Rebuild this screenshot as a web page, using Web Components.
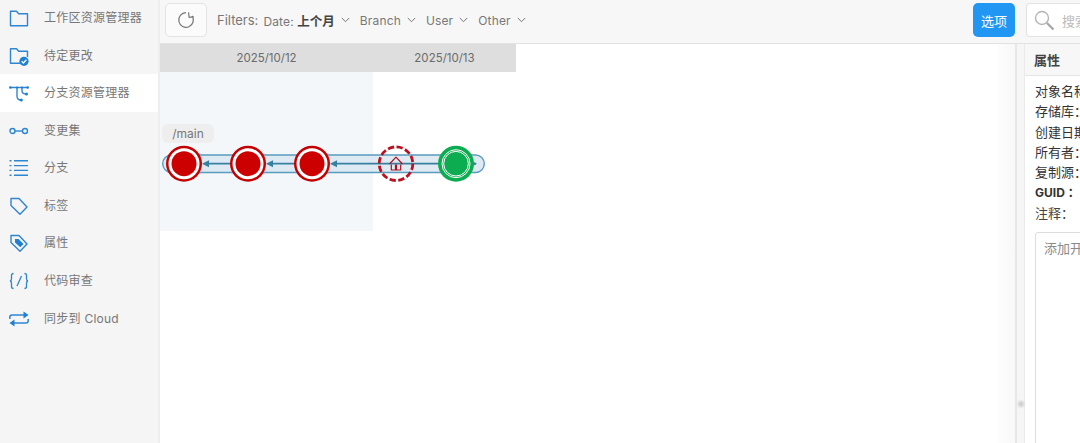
<!DOCTYPE html>
<html lang="zh"><head><meta charset="utf-8"><title>分支资源管理器</title>
<style>
html,body{margin:0;padding:0;height:100%;overflow:hidden;background:#fff}
body{font-family:Inter,"Noto Sans CJK SC",sans-serif}
</style></head><body>
<plastic-app></plastic-app>
<template id="t-app"><style>
:host{display:grid;grid-template-columns:160px 1fr;width:1080px;height:443px;overflow:hidden}
.main{display:grid;grid-template-rows:44px 1fr;min-width:0;height:443px}
.body{display:grid;grid-template-columns:837px 18px 9px 1fr;min-height:0}
.gutter{background:linear-gradient(90deg,#fdfdfd,#f8f8f8)}
</style>
<side-bar></side-bar>
<div class="main"><tool-bar></tool-bar>
<div class="body"><branch-canvas></branch-canvas><div class="gutter"></div><split-bar></split-bar><props-panel></props-panel></div></div>
</template>

<template id="t-side"><style>
:host{display:flex;flex-direction:column;background:#f5f5f5;border-right:2px solid #eeeeee;box-sizing:border-box;width:160px;height:443px;font:12px "Inter","Noto Sans CJK SC",sans-serif;color:#777}
nav-item:first-of-type{margin-top:-.9px}
</style>
<nav-item label="工作区资源管理器"><svg viewBox="0 0 20 20"><path d="M1.500 3.200h6l2.200 2.600h8.800v12H1.500z" fill="none" stroke="#2f86d0" stroke-width="1.400" stroke-linejoin="round"/></svg></nav-item>
<nav-item label="待定更改"><svg viewBox="0 0 20 20"><path d="M11 17.300H1.500V2.700h6l2.200 2.600h8.800V11" fill="none" stroke="#2f86d0" stroke-width="1.400" stroke-linejoin="round"/><circle cx="15" cy="15.300" r="4.600" fill="#1f7fd0"/><path d="M12.700 15.300l1.700 1.700 3-3.200" fill="none" stroke="#fff" stroke-width="1.300"/></svg></nav-item>
<nav-item label="分支资源管理器" active><svg viewBox="0 0 20 20"><g fill="none" stroke="#2f86d0" stroke-width="1.400"><path d="M1 4.500h18M8 4.500V13q0 4 4 4M13 4.500V8q0 3 4.500 3"/></g><g fill="#1f7fd0"><circle cx="1.300" cy="4.500" r="1.300"/><circle cx="8" cy="4.500" r="1.100"/><circle cx="13" cy="4.500" r="1.100"/><circle cx="18.700" cy="4.500" r="1.300"/><circle cx="12.300" cy="17" r="1.500"/><circle cx="17.500" cy="11" r="1.500"/></g></svg></nav-item>
<nav-item label="变更集"><svg viewBox="0 0 20 20"><g fill="none" stroke="#2f86d0" stroke-width="1.400"><circle cx="3.500" cy="10" r="2.500"/><circle cx="16" cy="10" r="2.500"/><path d="M6 10h7.500"/></g></svg></nav-item>
<nav-item label="分支"><svg viewBox="0 0 20 20"><g stroke="#2f86d0" stroke-width="1.400" fill="none"><path d="M5 2.800h14M5 7.600h14M5 12.400h14M5 17.200h14"/><path d="M.5 2.800h2M.5 7.600h2M.5 12.400h2M.5 17.200h2"/></g></svg></nav-item>
<nav-item label="标签"><svg viewBox="0 0 20 20"><path d="M2 2.500h8l8 8.500-7 7.200-9-8.700z" fill="none" stroke="#2f86d0" stroke-width="1.400" stroke-linejoin="round"/></svg></nav-item>
<nav-item label="属性"><svg viewBox="0 0 20 20"><path d="M2 2.500h8l8 8.500-7 7.200-9-8.700z" fill="none" stroke="#2f86d0" stroke-width="1.400" stroke-linejoin="round"/><path d="M6 6h3.500l5 5-3.300 3.300L6 9.500z" fill="#1f7fd0"/></svg></nav-item>
<nav-item label="代码审查"><svg viewBox="0 0 20 20"><g fill="none" stroke="#2f86d0" stroke-width="1.300"><path d="M4.500 2.500q-2 0-2 2v3.300q0 2-1.500 2.200 1.500.2 1.500 2.200v3.300q0 2 2 2M15.500 2.500q2 0 2 2v3.300q0 2 1.500 2.200-1.500.2-1.500 2.200v3.300q0 2-2 2M12.500 5l-4.500 10"/></g></svg></nav-item>
<nav-item label="同步到 Cloud"><svg viewBox="0 0 20 20"><g fill="none" stroke="#2f86d0" stroke-width="1.500"><path d="M.8 10V8.300q0-2.300 2.300-2.300H16"/><path d="M19.200 10v1.700q0 2.300-2.300 2.300H4"/></g><path d="M14.500 2.500l5 3.500-5 3.500zM5.500 10.500l-5 3.500 5 3.500z" fill="#1f7fd0"/></svg></nav-item>
</template>

<template id="t-nav"><style>
:host{display:flex;align-items:center;height:37.6px;flex:none;padding-left:9px;gap:15px;box-sizing:border-box}
:host([active]){background:#fff}
.ic{width:20px;height:20px;display:flex}
::slotted(svg){width:20px;height:20px;display:block}
.l{white-space:nowrap;line-height:18px;letter-spacing:.25px}
</style><span class="ic"><slot></slot></span><span class="l"></span></template>

<template id="t-tool"><style>
:host{display:flex;align-items:center;background:#f7f7f7;border-bottom:1px solid #e2e2e2;box-sizing:border-box;height:44px;font:13px Inter,"Noto Sans CJK SC",sans-serif;color:#777;padding:0 0 3px 5px;overflow:hidden}
.ref{width:42px;height:34px;box-sizing:border-box;background:#fbfbfb;border:1px solid #e3e3e3;border-radius:5px;display:flex;align-items:center;justify-content:center;flex:none}
.ref svg{width:18px;height:18px}
.fl{margin-left:10px;white-space:nowrap;color:#777;line-height:16px}
.filters{display:flex;align-items:center;gap:10px;margin-left:5px;flex:none}
.sp{flex:1}
.opt{width:42px;height:34px;background:#2196f3;color:#fff;border-radius:5px;border:0;font:13px "Noto Sans CJK SC",sans-serif;flex:none;padding:0;margin-right:11px}
.search{width:54px;height:34px;box-sizing:border-box;background:#fff;border:1px solid #e3e3e3;border-right:0;border-radius:4px 0 0 4px;display:flex;align-items:center;flex:none;padding-left:7px;gap:7px;color:#bbb;font:13px "Noto Sans CJK SC",sans-serif;white-space:nowrap}
.search svg{width:21px;height:21px;flex:none}
.search span{flex:none}
</style>
<div class="ref"><svg viewBox="0 0 18 18"><path d="M9 1.700A7.300 7.300 0 1 0 15 4.800M11.500 1.300l.7 5 4.800-.5" fill="none" stroke="#777" stroke-width="1.200"/></svg></div>
<span class="fl">Filters:</span>
<div class="filters"><filter-drop>Date: <b>上个月</b></filter-drop><filter-drop>Branch</filter-drop><filter-drop>User</filter-drop><filter-drop>Other</filter-drop></div>
<div class="sp"></div>
<button class="opt">选项</button>
<div class="search"><svg viewBox="0 0 21 21"><circle cx="8" cy="8" r="6.500" fill="none" stroke="#b5b5b5" stroke-width="1.400"/><path d="M13 13l6.500 6.500" stroke="#a5a5a5" stroke-width="2.200"/></svg><span>搜索</span></div>
</template>

<template id="t-drop"><style>
:host{display:inline-flex;align-items:center;gap:6px;white-space:nowrap;color:#777;font-size:12px;letter-spacing:.15px}
::slotted(b){color:#444;font-weight:700;font-size:12.500px;letter-spacing:0}
svg{width:9px;height:6px}
</style><span><slot></slot></span><svg viewBox="0 0 9 6"><path d="M.8 1l3.700 3.700L8.200 1" fill="none" stroke="#777" stroke-width="1"/></svg></template>

<template id="t-canvas"><style>
:host{display:block;position:relative;background:#fff;overflow:hidden;height:399px;font:11.500px Inter,sans-serif;color:#6b6b6b}
.heads{display:flex;height:28px}
.h{background:#dedede;display:flex;align-items:center;justify-content:center;line-height:16px}
.h1{width:213px}.h2{width:143px}
.tint{width:213px;height:159px;background:#f3f7fa}
.lab{position:absolute;left:2px;top:80px;width:52px;height:19px;border-radius:6px;background:#eee;display:flex;align-items:center;justify-content:center;font-size:12px;line-height:14px;color:#777}
svg{position:absolute;left:0;top:0;width:360px;height:180px}
</style>
<div class="heads"><div class="h h1">2025/10/12</div><div class="h h2">2025/10/13</div></div>
<div class="tint"></div>
<div class="lab">/main</div>
<svg viewBox="0 0 360 180">
<rect x="2.700" y="111" width="321.600" height="17.500" rx="8.750" fill="#dce8f2" fill-opacity=".9" stroke="#5a9cc0" stroke-width="1.400"/>
<g fill="#38809f">
<path d="M48 118.800h24v1.800H48zM112 118.800h24v1.800h-24zM176 118.800h140v1.800H176z"/>
<path d="M42 119.700l7-3.500v7zM106 119.700l7-3.500v7zM170 119.700l7-3.500v7z"/>
<path d="M310 116.200l1 3.500-1 3.500 7-3.500z"/>
</g>
<g>
<circle cx="24" cy="119.700" r="18" fill="#c40000"/><circle cx="24" cy="119.700" r="15.500" fill="#fff"/><circle cx="24" cy="119.700" r="12.500" fill="#cc0000"/>
<circle cx="88" cy="119.700" r="18" fill="#c40000"/><circle cx="88" cy="119.700" r="15.500" fill="#fff"/><circle cx="88" cy="119.700" r="12.500" fill="#cc0000"/>
<circle cx="152" cy="119.700" r="18" fill="#c40000"/><circle cx="152" cy="119.700" r="15.500" fill="#fff"/><circle cx="152" cy="119.700" r="12.500" fill="#cc0000"/>
</g>
<circle cx="236" cy="119.700" r="16.800" fill="none" stroke="#bb1020" stroke-width="2.800" stroke-dasharray="6.300 2.500"/>
<path d="M229.500 120l6.500-6.800 6.500 6.800M231.300 120.500V126h4.200v-5.500M236.500 120.500V126h4.200v-5.500" fill="none" stroke="#aa1020" stroke-width="1.200" stroke-linejoin="round"/>
<circle cx="296" cy="119.700" r="18" fill="#0bad50"/><circle cx="296" cy="119.700" r="14" fill="none" stroke="#fff" stroke-width="1"/><circle cx="296" cy="119.700" r="12.300" fill="none" stroke="#fff" stroke-width="1"/>
</svg>
</template>

<template id="t-split"><style>
:host{display:flex;align-items:flex-end;justify-content:center;background:#f6f6f6;border-left:2px solid #e7e7e7;box-sizing:border-box;height:399px;padding-bottom:36px}
i{width:6px;height:6px;border-radius:50%;background:#cfcfcf;display:block;filter:blur(1px)}
</style><i></i></template>

<template id="t-props"><style>
:host{display:block;background:#fff;height:399px;overflow:hidden;font:13px "Noto Sans CJK SC",Inter,sans-serif;color:#333;white-space:nowrap;border-left:1px solid #eaeaea}
.t{height:32px;background:#f7f7f7;border-bottom:1px solid #e6e6e6;display:flex;align-items:center;padding-left:9px;font-weight:700;color:#444;box-sizing:border-box;margin-bottom:5px}
.rows{display:grid;grid-auto-rows:20.300px;padding-left:10px;align-items:center}
.rows span{line-height:20px}
.g{font:700 12px Inter,"Noto Sans CJK SC",sans-serif}
.n{padding:0 0 0 10px;height:26px;box-sizing:border-box;color:#444}
.ta{margin:3px 0 0 10px;width:100px;height:300px;box-sizing:border-box;border:1px solid #ddd;border-radius:3px 0 0 0;padding:5px 0 0 8px;color:#8a8a8a}
</style>
<div class="t">属性</div>
<div class="rows"><span>对象名称：</span><span>存储库：</span><span>创建日期：</span><span>所有者：</span><span>复制源：</span><span class="g">GUID ：</span></div>
<div class="n">注释：</div>
<div class="ta">添加开</div>
</template>

<script>
function def(name, tpl, init){
  customElements.define(name, class extends HTMLElement{
    constructor(){super();this.attachShadow({mode:"open"}).appendChild(document.getElementById(tpl).content.cloneNode(true));}
    connectedCallback(){ if(init) init(this); }
  });
}
def("nav-item","t-nav",el=>{el.shadowRoot.querySelector(".l").textContent=el.getAttribute("label");});
def("filter-drop","t-drop");
def("side-bar","t-side");
def("tool-bar","t-tool");
def("branch-canvas","t-canvas");
def("split-bar","t-split");
def("props-panel","t-props");
def("plastic-app","t-app");
</script>
</body></html>
